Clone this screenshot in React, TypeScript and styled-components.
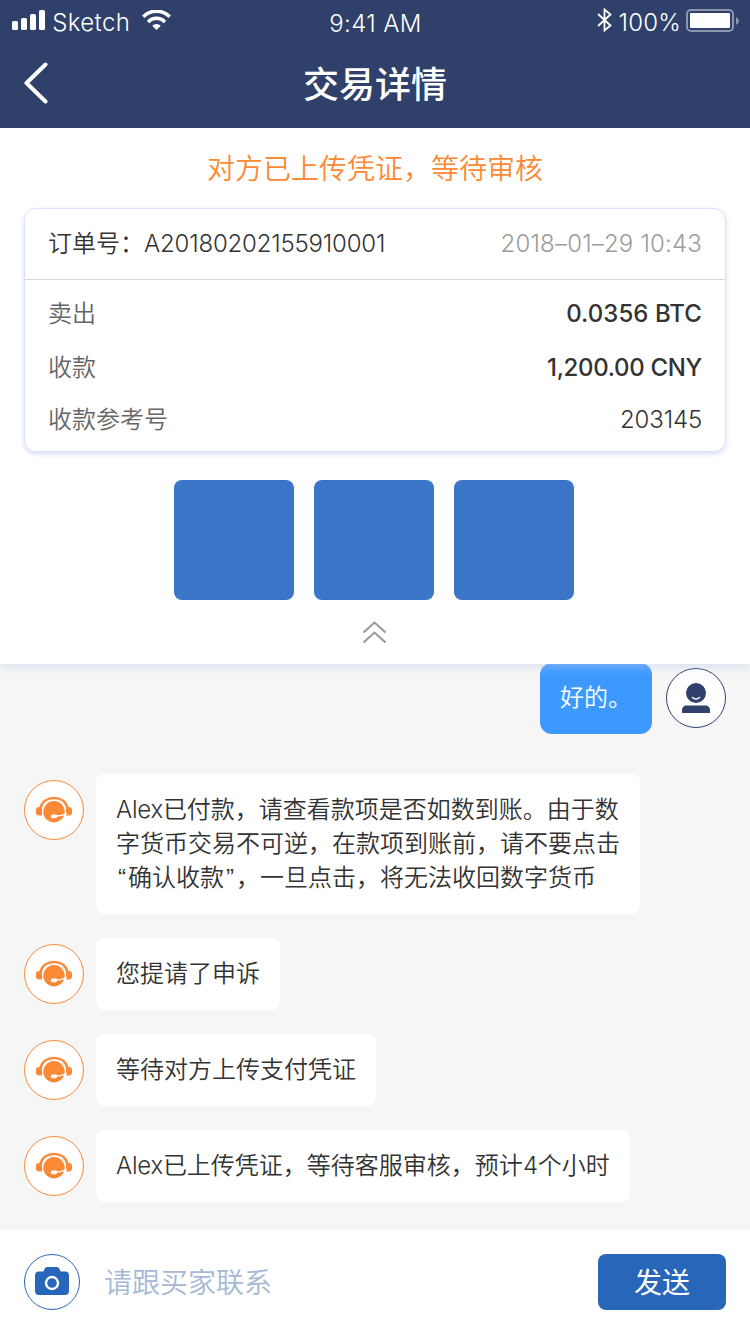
import React from 'react';
import styled, { createGlobalStyle } from 'styled-components';

const GlobalStyle = createGlobalStyle`
  * { box-sizing: border-box; }
  body {
    margin: 0;
    background: #fff;
    font-family: Inter, "Noto Sans CJK SC", sans-serif;
    font-weight: 350;
    color: #333;
  }
`;

const Screen = styled.div`
  display: flex;
  flex-direction: column;
  width: 750px;
  height: 1334px;
  overflow: hidden;
`;

const Header = styled.header`
  position: relative;
  z-index: 2;
  flex: none;
  height: 128px;
  background: #2f406b;
  color: #fff;
`;

const StatusBar = styled.div`
  display: grid;
  grid-template-columns: 1fr auto 1fr;
  height: 40px;
  padding: 0 11px 0 12px;
  font-size: 24px;
  line-height: 46px;
`;

const StatusGroup = styled.div<{ $end?: boolean }>`
  display: flex;
  align-items: flex-start;
  justify-content: ${(p) => (p.$end ? 'flex-end' : 'flex-start')};
`;

const Latin = styled.span<{ $spacing?: number; $weight?: number }>`
  letter-spacing: ${(p) => p.$spacing ?? -0.25}px;
  font-weight: ${(p) => p.$weight ?? 'inherit'};
  white-space: pre;
`;

const Clock = styled(Latin)`
  line-height: 47px;
`;

const Quote = styled.span`
  padding: 0 2px;
  font-family: "Liberation Sans", sans-serif;
`;

const NavBar = styled.div`
  display: grid;
  grid-template-columns: 48px 1fr 48px;
  align-items: center;
  height: 88px;
  padding: 0 24px;
`;

const Title = styled.h1`
  margin: 0;
  padding-top: 2px;
  font-size: 36px;
  font-weight: 500;
  line-height: 86px;
  text-align: center;
`;

const BackButton = styled.button`
  display: flex;
  padding: 0 0 2px;
  border: 0;
  background: none;
`;

const TradePanel = styled.section`
  position: relative;
  z-index: 1;
  flex: none;
  display: flex;
  flex-direction: column;
  align-items: center;
  height: 536px;
  background: #fff;
  box-shadow: 0 2px 10px rgba(190, 205, 235, 0.6);
`;

const Notice = styled.p`
  margin: 0;
  padding-top: 2px;
  font-size: 28px;
  line-height: 78px;
  color: #fc8936;
`;

const OrderCard = styled.div`
  width: 702px;
  height: 244px;
  border: 1px solid #d9e2f8;
  border-radius: 12px;
  box-shadow: 0 2px 4px rgba(60, 95, 200, 0.22);
  font-size: 24px;
`;

const OrderHead = styled.div`
  display: flex;
  justify-content: space-between;
  height: 71px;
  padding: 0 23px;
  border-bottom: 1px solid #d8d8da;
  line-height: 70px;
`;

const OrderTime = styled.time`
  color: #9b9b9b;
`;

const OrderRows = styled.dl`
  margin: 0;
  padding: 7px 23px 0;
`;

const OrderRow = styled.div<{ $height: number }>`
  display: flex;
  justify-content: space-between;
  height: ${(p) => p.$height}px;
  line-height: 53px;
`;

const Label = styled.dt`
  color: #666;
`;

const Value = styled.dd`
  margin: 0;
`;

const Proofs = styled.div`
  display: flex;
  gap: 20px;
  margin: 28px 2px 21px 0;
`;

const Proof = styled.div`
  width: 120px;
  height: 120px;
  border-radius: 8px;
  background: #3b75c8;
`;

const CollapseIcon = styled.svg`
  margin-right: 2px;
`;

const Chat = styled.main`
  flex: 1;
  display: flex;
  flex-direction: column;
  justify-content: flex-end;
  gap: 24px;
  min-height: 0;
  padding: 0 24px 28px;
  overflow: hidden;
  background: #f6f6f6;
`;

const Message = styled.div<{ $mine?: boolean }>`
  flex: none;
  display: flex;
  flex-direction: ${(p) => (p.$mine ? 'row-reverse' : 'row')};
  gap: ${(p) => (p.$mine ? 14 : 12)}px;
  margin-bottom: ${(p) => (p.$mine ? 16 : 0)}px;
`;

const Avatar = styled.div<{ $color: string; $size?: number }>`
  flex: none;
  display: flex;
  align-items: center;
  justify-content: center;
  width: ${(p) => p.$size ?? 60}px;
  height: ${(p) => p.$size ?? 60}px;
  margin-top: ${(p) => (p.$size ? 0 : 6)}px;
  padding-bottom: ${(p) => (p.$size ? 2 : 0)}px;
  border: 1px solid ${(p) => p.$color};
  border-radius: 50%;
  background: #fff;
`;

const Bubble = styled.div<{ $mine?: boolean }>`
  margin-top: ${(p) => (p.$mine ? 1 : 0)}px;
  padding: ${(p) => (p.$mine ? 18 : 19)}px 20px 19px;
  border-radius: ${(p) => (p.$mine ? 12 : 8)}px;
  background: ${(p) => (p.$mine ? '#3d99ff' : '#fff')};
  color: ${(p) => (p.$mine ? '#fff' : '#333')};
  font-size: 24px;
  line-height: 34px;
  white-space: nowrap;
`;

const Composer = styled.footer`
  flex: none;
  display: flex;
  align-items: center;
  height: 104px;
  padding: 0 24px;
  background: #fff;
`;

const Placeholder = styled.div`
  flex: 1;
  padding: 2px 0 0 24px;
  font-size: 28px;
  line-height: 54px;
  color: #a5b9d7;
`;

const SendButton = styled.button`
  width: 128px;
  height: 56px;
  padding: 2px 0 0;
  border: 0;
  border-radius: 8px;
  background: #2766b9;
  color: #fff;
  font: 400 28px/54px Inter, "Noto Sans CJK SC", sans-serif;
`;

const StatusIcon = styled.svg<{ $top: number; $left?: number }>`
  flex: none;
  margin: ${(p) => p.$top}px 0 0 ${(p) => p.$left ?? 0}px;
`;

const AgentIcon = () => (
  <svg width="36" height="28" viewBox="0 0 36 28" fill="none">
    <path d="M4.500 12C6 5.300 11.500 2 18 2s12 3.300 13.500 10" stroke="#fc8936" strokeWidth="2.400" />
    <path d="M6 11v8.500H3a3 3 0 0 1-3-3V14a3 3 0 0 1 3-3zM30 11v8.500h3a3 3 0 0 0 3-3V14a3 3 0 0 0-3-3z" fill="#fc8936" />
    <circle cx="18" cy="15.800" r="10.700" fill="#fc8936" />
    <path d="M17.500 20.300Q25 20.300 31 17.600" stroke="#fff" strokeWidth="1.500" />
    <ellipse cx="18" cy="20.200" rx="3.200" ry="2" fill="#fff" />
  </svg>
);

const UserIcon = () => (
  <svg width="28" height="30" viewBox="0 0 28 30">
    <circle cx="14" cy="10" r="10" fill="#2f406b" />
    <path d="M0 30v-3a4.500 4.500 0 0 1 4.500-4.500h19a4.500 4.500 0 0 1 4.500 4.500v3z" fill="#2f406b" />
    <path d="M10.500 14.500q3.500 3 7 0" fill="none" stroke="#fff" strokeWidth="1.500" strokeLinecap="round" />
  </svg>
);

const CameraIcon = () => (
  <svg width="34" height="28" viewBox="0 0 34 28">
    <path
      d="M4 4.500h4.500Q9 2.500 10 1.200Q11 0 12.500 0h9q1.500 0 2.500 1.200t1.500 3.300H30a4 4 0 0 1 4 4V24a4 4 0 0 1-4 4H4a4 4 0 0 1-4-4V8.500a4 4 0 0 1 4-4z"
      fill="#2766b9"
    />
    <circle cx="17" cy="16" r="6" fill="none" stroke="#fff" strokeWidth="2.400" />
  </svg>
);

const agentMessages: React.ReactNode[] = [
  <>
    <Latin>Alex</Latin>已付款，请查看款项是否如数到账。由于数
    <br />
    字货币交易不可逆，在款项到账前，请不要点击
    <br />
    <Quote>“</Quote>确认收款<Quote>”</Quote>，一旦点击，将无法收回数字货币
  </>,
  <>您提请了申诉</>,
  <>等待对方上传支付凭证</>,
  <>
    <Latin>Alex</Latin>已上传凭证，等待客服审核，预计<Latin>4</Latin>个小时
  </>,
];

export default function App() {
  return (
    <Screen>
      <GlobalStyle />
      <Header>
        <StatusBar>
          <StatusGroup>
            <StatusIcon $top={10} width="33" height="20" viewBox="0 0 33 20" fill="#fff">
              <rect x="0" y="11" width="6" height="9" rx="1.500" />
              <rect x="9" y="8" width="6" height="12" rx="1.500" />
              <rect x="18" y="4" width="6" height="16" rx="1.500" />
              <rect x="27" y="0" width="6" height="20" rx="1.500" />
            </StatusIcon>
            <Latin $spacing={0.4}> Sketch</Latin>
            <StatusIcon $top={10} $left={12} width="29" height="20" viewBox="0 0 29 20">
              <path d="M1.300 6.700a18.700 18.700 0 0 1 26.400 0" fill="none" stroke="#fff" strokeWidth="3.700" />
              <path d="M6 11.900a12 12 0 0 1 17 0" fill="none" stroke="#fff" strokeWidth="3.500" />
              <path d="M14.500 20l-4.300-4.200a6.100 6.100 0 0 1 8.600 0z" fill="#fff" />
            </StatusIcon>
          </StatusGroup>
          <Clock $spacing={0.4}>9:41 AM</Clock>
          <StatusGroup $end>
            <StatusIcon $top={8} width="15" height="24" viewBox="0 0 15 24">
              <path d="M1 6l12.500 11.500L7.500 22.500V1.500l6 5L1 18" fill="none" stroke="#fff" strokeWidth="1.800" />
            </StatusIcon>
            <Latin $spacing={0.2}> 100%</Latin>
            <StatusIcon $top={9} $left={5} width="53" height="23" viewBox="0 0 53 23">
              <rect x="1" y="1" width="46" height="21" rx="4" fill="none" stroke="#fff" strokeOpacity=".45" strokeWidth="2" />
              <rect x="4" y="4" width="40" height="15" rx="1" fill="#fff" />
              <path d="M50 8q3 1.500 3 4t-3 4z" fill="#fff" fillOpacity=".45" />
            </StatusIcon>
          </StatusGroup>
        </StatusBar>
        <NavBar>
          <BackButton aria-label="返回">
            <svg width="24" height="42" viewBox="0 0 24 42">
              <path d="M21.500 2.500L2.500 21l19 18.500" fill="none" stroke="#fff" strokeWidth="4" strokeLinecap="round" strokeLinejoin="round" />
            </svg>
          </BackButton>
          <Title>交易详情</Title>
        </NavBar>
      </Header>

      <TradePanel>
        <Notice>对方已上传凭证，等待审核</Notice>
        <OrderCard>
          <OrderHead>
            <span>
              订单号：<Latin $spacing={-0.19}>A20180202155910001</Latin>
            </span>
            <OrderTime>
              <Latin $spacing={0.18}>2018–01–29 10:43</Latin>
            </OrderTime>
          </OrderHead>
          <OrderRows>
            <OrderRow $height={54}>
              <Label>卖出</Label>
              <Value>
                <Latin $spacing={0.05} $weight={500}>0.0356 BTC</Latin>
              </Value>
            </OrderRow>
            <OrderRow $height={52}>
              <Label>收款</Label>
              <Value>
                <Latin $spacing={-0.32} $weight={500}>1,200.00 CNY</Latin>
              </Value>
            </OrderRow>
            <OrderRow $height={53}>
              <Label>收款参考号</Label>
              <Value>
                <Latin $spacing={-0.15}>203145</Latin>
              </Value>
            </OrderRow>
          </OrderRows>
        </OrderCard>
        <Proofs>
          <Proof />
          <Proof />
          <Proof />
        </Proofs>
        <CollapseIcon width="24" height="23" viewBox="0 0 24 23" fill="none" stroke="#999" strokeWidth="2">
          <path d="M1.500 11.500l11-10 11 10M1.500 21.500l11-10 11 10" />
        </CollapseIcon>
      </TradePanel>

      <Chat>
        <Message $mine>
          <Avatar $color="#2f406b">
            <UserIcon />
          </Avatar>
          <Bubble $mine>好的。</Bubble>
        </Message>
        {agentMessages.map((text, i) => (
          <Message key={i}>
            <Avatar $color="#fc8936">
              <AgentIcon />
            </Avatar>
            <Bubble>{text}</Bubble>
          </Message>
        ))}
      </Chat>

      <Composer>
        <Avatar $color="#2766b9" $size={56}>
          <CameraIcon />
        </Avatar>
        <Placeholder>请跟买家联系</Placeholder>
        <SendButton>发送</SendButton>
      </Composer>
    </Screen>
  );
}
